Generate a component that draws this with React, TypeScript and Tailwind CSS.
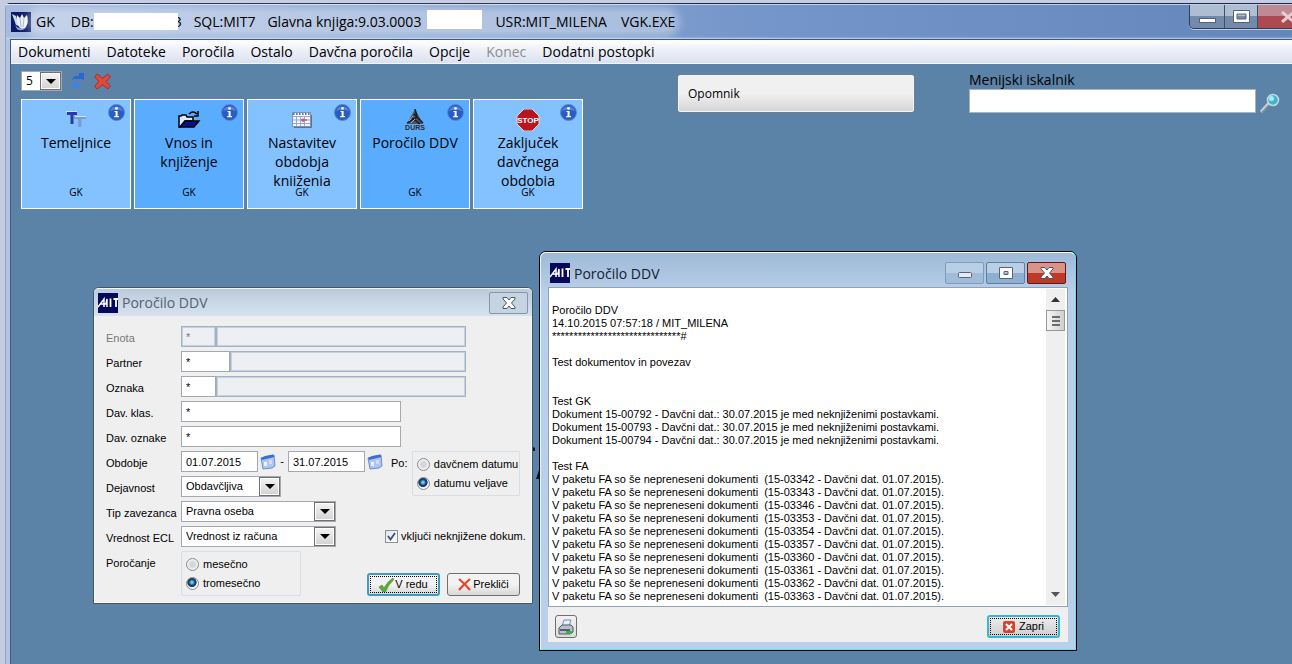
import { useState } from "react"
import type { ReactNode } from "react"
import clsx from "clsx"

interface TileProps {
  title: string
  icon: ReactNode
  strong?: boolean
}

const MENU = [
  { label: "Dokumenti" },
  { label: "Datoteke" },
  { label: "Poročila" },
  { label: "Ostalo" },
  { label: "Davčna poročila" },
  { label: "Opcije" },
  { label: "Konec", disabled: true },
  { label: "Dodatni postopki" },
]

const GK_DOCS = ["15-00792", "15-00793", "15-00794"]
const FA_DOCS = [
  "15-03342",
  "15-03343",
  "15-03346",
  "15-03353",
  "15-03354",
  "15-03357",
  "15-03360",
  "15-03361",
  "15-03362",
  "15-03363",
]

const REPORT = [
  "",
  "Poročilo DDV",
  "14.10.2015 07:57:18 / MIT_MILENA",
  "******************************#",
  "",
  "Test dokumentov in povezav",
  "",
  "",
  "Test GK",
  ...GK_DOCS.map((d) => `Dokument ${d} - Davčni dat.: 30.07.2015 je med neknjiženimi postavkami.`),
  "",
  "Test FA",
  ...FA_DOCS.map((d) => `V paketu FA so še nepreneseni dokumenti  (${d} - Davčni dat. 01.07.2015).`),
]

/* ---------- icons ---------- */

function AppIcon() {
  return (
    <svg width="20" height="20" viewBox="0 0 20 20" className="shrink-0" aria-hidden="true">
      <rect width="20" height="20" fill="#0a1a66" />
      <path d="M1 2 L5 4 L8 14 L5 13 Z" fill="#c9d6f0" />
      <path d="M6 3 L9 6 L11 2 L13 6 L16 3 Q18 10 15 15 Q12 19 8 15 Q5 10 6 3Z" fill="#eef3fb" />
      <path d="M9 6 L10 15 M13 6 L12 15" stroke="#9fb3dc" strokeWidth="1" />
      <path d="M4 13 Q8 18 15 16 Q10 20 6 17Z" fill="#8da6da" />
    </svg>
  )
}

function MitIcon() {
  return (
    <svg width="20" height="20" viewBox="0 0 20 20" className="shrink-0" aria-hidden="true">
      <rect width="20" height="20" fill="#06085c" />
      <path d="M0 14 L6 6 L6 14 M2 11 H8 L9 6 V14" fill="none" stroke="#fff" strokeWidth="1.5" />
      <path d="M12.500 5.500 V14 M18 5.500 V14 M15.500 6 H20" fill="none" stroke="#fff" strokeWidth="1.8" />
    </svg>
  )
}

function InfoIcon() {
  return (
    <svg width="17" height="17" viewBox="0 0 17 17" aria-hidden="true">
      <circle cx="8.5" cy="8.5" r="8" fill="#2a5cc6" stroke="#5b86d6" />
      <path d="M2 7 A7 7 0 0 1 15 7 Q8 4 2 7Z" fill="#5485dd" />
      <circle cx="8.5" cy="4.4" r="1.4" fill="#fff" />
      <path d="M6.5 7 H9.6 V12 H11 V13.2 H6.2 V12 H7.6 V8.1 H6.5Z" fill="#fff" />
    </svg>
  )
}

function TypeIcon() {
  return (
    <svg width="22" height="20" viewBox="0 0 22 20" aria-hidden="true">
      <path d="M2 2 H12 V5 H8.500 V14 H5.500 V5 H2Z" fill="#2b3a9c" />
      <path d="M9 6 H21 V9 H16.500 V17 H13 V9 H9Z" fill="#7b9bd6" />
      <path d="M1 1.500 H12 M10 6.500 H21" stroke="#cfe2fb" />
    </svg>
  )
}

function FolderIcon() {
  return (
    <svg width="24" height="20" viewBox="0 0 24 20" aria-hidden="true">
      <path d="M2 6 H4 L5 5 H9 L10 7 H16 V11 H8 L3 17 H2Z" fill="#dbe7fa" stroke="#000" strokeWidth="1.5" />
      <path d="M8 11 H22 L17 17 H3Z" fill="#06108a" stroke="#000" strokeWidth="1.4" />
      <path d="M12 4 Q16 0 20 4 M21 1 V6 H17" fill="none" stroke="#000" strokeWidth="1.4" />
    </svg>
  )
}

function CalendarIcon() {
  return (
    <svg width="22" height="20" viewBox="0 0 22 20" aria-hidden="true">
      <rect x="1.500" y="2.500" width="18" height="14" fill="#f4f8ff" stroke="#7d92bd" />
      <path d="M2 6.500 H19 M2 10 H19 M2 13.500 H19 M5.500 6 V16 M9.500 6 V16 M13.500 6 V16" stroke="#94a7cc" />
      <path d="M2 4 H19" stroke="#5b71a5" strokeWidth="2" strokeDasharray="1.5 1.5" />
      <path d="M10 10 H16 M12 8.500 V12" stroke="#d3506a" strokeWidth="1.500" />
      <path d="M3 17.500 H20.500 V5" fill="none" stroke="#5f6f92" />
    </svg>
  )
}

function DursIcon() {
  return (
    <svg width="24" height="22" viewBox="0 0 24 22" aria-hidden="true">
      <path d="M12 0 L20 15 H4Z" fill="#4b5059" />
      <path d="M12 0 L14 8 L4 14 M11 5 L20 14 M8 8 L17 15" fill="none" stroke="#16181c" strokeWidth="1.4" />
      <path d="M10 7 L6 12 M12 10 L8 14" stroke="#aab6c6" strokeWidth="1" />
      <text x="12" y="21" textAnchor="middle" fontSize="7" fontWeight="bold" fontFamily="Liberation Sans, sans-serif" fill="#2b2a2c">
        DURS
      </text>
    </svg>
  )
}

function StopIcon() {
  return (
    <svg width="24" height="22" viewBox="0 0 24 22" aria-hidden="true">
      <path d="M8 0 H16 L23 7 V15 L16 22 H8 L1 15 V7Z" fill="#b9141f" stroke="#e9d6e0" />
      <text x="12" y="14" textAnchor="middle" fontSize="8" fontWeight="bold" fontFamily="Liberation Sans, sans-serif" fill="#fff">
        STOP
      </text>
    </svg>
  )
}

function RefreshIcon() {
  return (
    <svg width="14" height="16" viewBox="0 0 14 16" aria-hidden="true">
      <path d="M1 7 Q3 2 8 3 V0 H13 V7 L10 6 L8 6 Q4 5 1 7Z" fill="#2a66d8" />
      <path d="M11 11 Q9 15 5 15 L2 14 V9 L5 8 L8 10 L6 11 Q9 12 11 11Z" fill="#3f80ea" />
    </svg>
  )
}

function RedCross() {
  return (
    <svg width="17" height="17" viewBox="0 0 16 16" aria-hidden="true">
      <path
        d="M3 1 L8 5 L13 1 L15.500 3.500 L11.500 8 L15.500 12.500 L13 15 L8 11 L3 15 L0.500 12.500 L4.500 8 L0.500 3.500Z"
        fill="#e2493c"
        stroke="#a3231c"
        strokeWidth="0.8"
      />
    </svg>
  )
}

function SearchIcon() {
  return (
    <svg width="20" height="20" viewBox="0 0 20 20" aria-hidden="true">
      <path d="M1 19 L9 10" stroke="#c9ced4" strokeWidth="3" />
      <path d="M1.500 19.500 L9 11.500" stroke="#6f7c8c" strokeWidth="1" />
      <circle cx="13" cy="7" r="5.500" fill="#3fb4cd" stroke="#c3d6df" strokeWidth="1.600" />
      <circle cx="11.500" cy="5.500" r="2.500" fill="#a7ecf6" />
    </svg>
  )
}

function DateIcon() {
  return (
    <svg width="16" height="16" viewBox="0 0 16 16" aria-hidden="true">
      <path d="M1 4 L14 1 L15 12 L12 14 L3 15Z" fill="#a9c6f5" stroke="#6a8fd4" />
      <path d="M1 4 L5 2 L13 0.500 L14.500 3 L2 6Z" fill="#3c6fd0" />
      <path d="M4 8 H7 V12 H4Z" fill="#eaf2ff" />
      <path d="M9 6 H12 V10 H9Z" fill="#f0cfe4" />
    </svg>
  )
}

function CheckIcon() {
  return (
    <svg width="15" height="14" viewBox="0 0 15 14" aria-hidden="true">
      <path d="M0 9 L3 7 L5 10 Q9 3 14 0 L14.500 2 Q9 7 6.500 14 H4Z" fill="#5dab3d" stroke="#3d8a2a" strokeWidth="0.6" />
    </svg>
  )
}

function CancelIcon() {
  return (
    <svg width="13" height="13" viewBox="0 0 13 13" aria-hidden="true">
      <path d="M1 1 Q7 6 12 12 M12 1 Q6 6 1 12" fill="none" stroke="#e8432c" strokeWidth="2.2" />
    </svg>
  )
}

function CloseGlyph() {
  return (
    <svg width="14" height="12" viewBox="0 0 14 12" aria-hidden="true">
      <path
        d="M1 0.500 H5 L7 3 L9 0.500 H13 V2 L9.500 6 L13 10 V11.500 H9 L7 9 L5 11.500 H1 V10 L4.500 6 L1 2Z"
        fill="#fff"
        stroke="#4c5563"
        strokeWidth="1"
      />
    </svg>
  )
}

function MinGlyph() {
  return (
    <svg width="14" height="6" viewBox="0 0 14 6" aria-hidden="true">
      <rect x="0.500" y="0.500" width="13" height="5" rx="1" fill="#fff" fillOpacity="0.7" stroke="#5a6474" />
    </svg>
  )
}

function MaxGlyph() {
  return (
    <svg width="14" height="12" viewBox="0 0 14 12" aria-hidden="true">
      <path d="M0.500 0.500 H13.500 V11.500 H0.500Z M5 4.500 V7.500 H9 V4.500Z" fill="#fff" fillRule="evenodd" stroke="#5a6474" />
    </svg>
  )
}

function PrinterIcon() {
  return (
    <svg width="16" height="16" viewBox="0 0 16 16" aria-hidden="true">
      <path d="M4 7 L6 1 H13 L11 7Z" fill="#e6eefb" stroke="#7a8fb8" />
      <path d="M1 9 L4 6 H13 L15 8 V13 L12 15 H1Z" fill="#b9c0cc" stroke="#4c566a" />
      <path d="M2 10 H12 V12 H2Z" fill="#525f74" />
      <path d="M8 12 H14 V15 H8Z" fill="#3bb143" />
    </svg>
  )
}

/* ---------- small controls ---------- */

function DropArrow() {
  return (
    <span className="pointer-events-none absolute inset-y-px right-px flex w-[21px] items-center justify-center border border-[#707070] bg-linear-to-b from-[#f4f4f4] to-[#d2d2d2] shadow-[inset_0_0_0_1px_#fff]">
      <svg width="10" height="5" viewBox="0 0 10 5" aria-hidden="true">
        <path d="M0 0 H10 L5 5Z" fill="#000" />
      </svg>
    </span>
  )
}

function Combo({ id, value, className }: { id: string; value: string; className: string }) {
  return (
    <div className={clsx("relative h-[21px] shrink-0", className)}>
      <select
        id={id}
        defaultValue={value}
        className="block h-full w-full appearance-none border border-[#a5a8ae] bg-white pr-6 pl-1 text-[11px] leading-[19px]"
      >
        <option>{value}</option>
      </select>
      <DropArrow />
    </div>
  )
}

function Row({ label, id, muted, children }: { label: string; id: string; muted?: boolean; children: ReactNode }) {
  return (
    <div className="flex h-[21px]">
      <label htmlFor={id} className={clsx("w-[75px] shrink-0 pt-1 leading-4 whitespace-nowrap", muted && "text-[#777]")}>
        {label}
      </label>
      {children}
    </div>
  )
}

function Field({ id, value = "", disabled, className }: { id?: string; value?: string; disabled?: boolean; className: string }) {
  return (
    <input
      id={id}
      aria-label={id ? undefined : "Naziv"}
      defaultValue={value}
      disabled={disabled}
      className={clsx(
        "h-[21px] shrink-0 border px-1 leading-4",
        disabled ? "border-[#a3b3c7] bg-[#edeff3] text-[#777] shadow-[inset_0_0_0_1px_#c6d1df]" : "border-[#a5a8ae] bg-white",
        className,
      )}
    />
  )
}

function Radio({ name, label, checked, onChange }: { name: string; label: string; checked: boolean; onChange: () => void }) {
  return (
    <label className="flex h-[19px] items-center gap-1 whitespace-nowrap">
      <input
        type="radio"
        name={name}
        checked={checked}
        onChange={onChange}
        className="size-[13px] shrink-0 appearance-none rounded-full border border-[#868a8f] bg-[radial-gradient(circle,#d4d7da_30%,#fafafa_75%)] checked:bg-[radial-gradient(circle_at_45%_40%,#7fd0ee_8%,#123f6e_35%,#123f6e_48%,#f4f4f4_56%)]"
      />
      {label}
    </label>
  )
}

function Tile({ title, icon, strong }: TileProps) {
  return (
    <button
      type="button"
      className={clsx(
        "relative flex h-[110px] w-[110px] flex-col items-center border border-white pt-2",
        strong ? "bg-[#5aacff]" : "bg-[#84c1ff]",
      )}
    >
      <span className="absolute top-1 right-[5px]">
        <InfoIcon />
      </span>
      <span className="flex h-6 items-center">{icon}</span>
      <span className="mt-px h-[53px] overflow-hidden px-2 text-[14px] leading-[19px]">{title}</span>
      <span className="text-[10px] leading-3">GK</span>
    </button>
  )
}

/* ---------- windows ---------- */

function TitleBar() {
  return (
    <header className="flex h-[35px] items-start border-t border-white/60 bg-linear-to-r from-[#a7bbdf] via-[#7495c9] via-60% to-[#6486ba] pl-[5px] shadow-[inset_0_-2px_2px_-1px_#c8d8f0]">
      <div className="flex h-[33px] items-center text-[14px] whitespace-pre">
        <AppIcon />
        <h1 className="flex h-5 items-center rounded-full bg-white/35 pl-[5px] shadow-[0_0_8px_5px_rgb(255_255_255/0.35)]">
          <span className="mr-4">GK</span>
          <span>DB:</span>
          <span className="mr-3 flex h-[17px] w-[88px] items-center justify-end bg-linear-to-r from-white from-95% to-transparent to-95%">
            <span className="w-1 overflow-hidden" dir="rtl">3</span>
          </span>
          <span className="mr-3">SQL:MIT7</span>
          <span className="mr-[6px]">Glavna knjiga:9.03.0003</span>
          <span className="mr-[13px] mb-1 h-[19px] w-[55px] bg-white" />
          <span className="mr-[14px]">USR:MIT_MILENA</span>
          <span>VGK.EXE</span>
        </h1>
      </div>
      <div className="ml-auto flex h-6 overflow-hidden rounded-bl-[5px] border-b border-l border-[#2c3f60] shadow-[0_1px_0_#ffffff90]">
        <button type="button" aria-label="Pomanjšaj" className="flex w-[35px] items-center justify-center border-r border-[#3b4f70] bg-linear-to-b from-[#aebdd2] from-50% to-[#738aab] to-50% pt-2">
          <svg width="17" height="5" viewBox="0 0 17 5" aria-hidden="true">
            <rect x="0.500" y="0.500" width="16" height="4" fill="#fff" stroke="#55617a" />
          </svg>
        </button>
        <button type="button" aria-label="Povečaj" className="flex w-[33px] items-center justify-center border-r border-[#3b4f70] bg-linear-to-b from-[#aebdd2] from-50% to-[#738aab] to-50%">
          <svg width="17" height="13" viewBox="0 0 17 13" aria-hidden="true">
            <path d="M0.500 0.500 H16.500 V12.500 H0.500Z M4 4 V9 H13 V4Z" fill="#fff" fillRule="evenodd" stroke="#55617a" />
          </svg>
        </button>
        <button type="button" aria-label="Zapri" className="flex w-[34px] items-center overflow-hidden bg-linear-to-b from-[#c08a94] from-50% to-[#ab4a50] to-50% pl-[22px]">
          <svg width="16" height="12" viewBox="0 0 16 12" className="shrink-0" aria-hidden="true">
            <path d="M2 1 L14 11 M14 1 L2 11" stroke="#e6cfd4" strokeWidth="3" />
          </svg>
        </button>
      </div>
    </header>
  )
}

function MenuBar() {
  return (
    <nav className="flex h-[25px] items-center gap-4 border-t border-b border-t-[#3d5a87] border-b-[#f4f6fb] bg-linear-to-b from-white via-[#eef1f8] via-40% to-[#dbe1f1] pl-[7px] text-[14px] whitespace-nowrap">
      {MENU.map((item) => (
        <button key={item.label} type="button" disabled={item.disabled} className="disabled:text-[#8d8d8d]">
          {item.label}
        </button>
      ))}
    </nav>
  )
}

function VatDialog() {
  const [by, setBy] = useState("veljave")
  const [period, setPeriod] = useState("tromesecno")

  return (
    <section className="absolute top-[223px] left-[82px] w-[440px] rounded-t-[6px] border border-[#46566a] bg-[#efefef] font-['Liberation_Sans',Arial,sans-serif] text-[11px] shadow-[inset_0_0_0_1px_#f6f9fc]">
      <div className="flex h-7 items-center rounded-t-[5px] border-t border-white/70 bg-linear-to-b from-[#bccbdb] to-[#d6e2f0] pr-1 pl-1">
        <MitIcon />
        <h2 className="ml-1 font-['Open_Sans','Noto_Sans',sans-serif] text-[14px] text-[#56616e]">Poročilo DDV</h2>
        <button type="button" aria-label="Zapri okno" className="ml-auto flex h-[22px] w-[39px] items-center justify-center rounded-xs border border-[#8795a8] bg-[#c6d3e2]">
          <CloseGlyph />
        </button>
      </div>

      <form className="flex flex-col gap-1 pt-[10px] pr-3 pb-[7px] pl-3" onSubmit={(e) => e.preventDefault()}>
        <Row label="Enota" id="enota" muted>
          <Field id="enota" value="*" disabled className="w-[35px]" />
          <Field disabled className="w-[250px]" />
        </Row>
        <Row label="Partner" id="partner">
          <Field id="partner" value="*" className="w-[49px]" />
          <Field disabled className="w-[236px]" />
        </Row>
        <Row label="Oznaka" id="oznaka">
          <Field id="oznaka" value="*" className="w-[35px]" />
          <Field disabled className="w-[250px]" />
        </Row>
        <Row label="Dav. klas." id="klas">
          <Field id="klas" value="*" className="w-[220px]" />
        </Row>
        <Row label="Dav. oznake" id="oznake">
          <Field id="oznake" value="*" className="w-[220px]" />
        </Row>

        <div className="flex">
          <div className="flex w-[285px] shrink-0 flex-col gap-1">
            <Row label="Obdobje" id="od">
              <Field id="od" value="01.07.2015" className="w-[77px]" />
              <button type="button" aria-label="Izberi začetni datum" className="ml-[2px]">
                <DateIcon />
              </button>
              <span className="w-3 pt-1 text-center leading-3">-</span>
              <Field id="do" value="31.07.2015" className="w-[77px]" />
              <button type="button" aria-label="Izberi končni datum" className="ml-[2px]">
                <DateIcon />
              </button>
            </Row>
            <Row label="Dejavnost" id="dejavnost">
              <Combo id="dejavnost" value="Obdavčljiva" className="w-[100px]" />
            </Row>
          </div>
          <span className="w-[21px] pt-1 leading-4">Po:</span>
          <fieldset aria-label="Po" className="h-[45px] w-[109px] rounded-xs border border-[#d5dfe5] pt-[3px] pl-1">
            <Radio name="by" label="davčnem datumu" checked={by === "davcnem"} onChange={() => setBy("davcnem")} />
            <Radio name="by" label="datumu veljave" checked={by === "veljave"} onChange={() => setBy("veljave")} />
          </fieldset>
        </div>

        <Row label="Tip zavezanca" id="tip">
          <Combo id="tip" value="Pravna oseba" className="w-[155px]" />
        </Row>
        <Row label="Vrednost ECL" id="ecl">
          <Combo id="ecl" value="Vrednost iz računa" className="w-[155px]" />
          <label className="relative ml-[49px] flex shrink-0 items-center gap-[3px] whitespace-nowrap">
            <input type="checkbox" defaultChecked className="peer size-[13px] appearance-none border border-[#8e8f8f] bg-linear-to-br from-[#dfe3ea] to-white" />
            <svg width="9" height="9" viewBox="0 0 9 9" className="absolute left-[2px] hidden peer-checked:block" aria-hidden="true">
              <path d="M1 4 L3.500 7.500 L8 1" fill="none" stroke="#3a4f86" strokeWidth="1.8" />
            </svg>
            vključi neknjižene dokum.
          </label>
        </Row>

        <div className="flex items-start">
          <span className="w-[75px] pt-1 leading-4">Poročanje</span>
          <fieldset aria-label="Poročanje" className="h-[45px] w-[120px] rounded-xs border border-[#d5dfe5] pt-[3px] pl-1">
            <Radio name="period" label="mesečno" checked={period === "mesecno"} onChange={() => setPeriod("mesecno")} />
            <Radio name="period" label="tromesečno" checked={period === "tromesecno"} onChange={() => setPeriod("tromesecno")} />
          </fieldset>
          <div className="ml-auto flex gap-[7px] self-end">
            <button type="submit" className="h-[23px] w-[73px] rounded-[3px] border-2 border-[#3c9cc4] bg-linear-to-b from-[#f2f2f2] from-50% to-[#d8d8d8] p-px">
              <span className="flex h-full items-center justify-center gap-px border border-dotted border-black">
                <CheckIcon />V redu
              </span>
            </button>
            <button type="button" className="flex h-[23px] w-[73px] items-center justify-center gap-[2px] rounded-[3px] border border-[#707070] bg-linear-to-b from-[#f2f2f2] from-50% to-[#d8d8d8]">
              <CancelIcon />
              Prekliči
            </button>
          </div>
        </div>
      </form>
    </section>
  )
}

function ReportWindow() {
  return (
    <section className="absolute top-[187px] left-[528px] w-[538px] rounded-t-[7px] border border-black bg-linear-to-b from-[#9db9d6] to-[#b9cfea] to-10% font-['Liberation_Sans',Arial,sans-serif] text-[11px]">
      <div className="rounded-t-[6px] border border-t-white border-r-[#6fdcf4] border-b-[#6fdcf4] border-l-[#e8f2fc] px-[7px] pb-[7px]">
        <div className="flex h-[34px] items-center pt-[6px] pl-[2px]">
          <MitIcon />
          <h2 className="ml-1 font-['Open_Sans','Noto_Sans',sans-serif] text-[14px] text-[#152030]">Poročilo DDV</h2>
          <div className="ml-auto flex gap-[2px] pr-[2px]">
            <button type="button" aria-label="Pomanjšaj okno" className="flex h-[22px] w-[39px] items-center justify-center rounded-xs border border-[#7f9cbc] bg-linear-to-b from-[#b9cfe6] from-50% to-[#a0bcd9] to-50% pt-1">
              <MinGlyph />
            </button>
            <button type="button" aria-label="Povečaj okno" className="flex h-[22px] w-[39px] items-center justify-center rounded-xs border border-[#5f7fa5] bg-linear-to-b from-[#b9cfe6] from-50% to-[#8fafd1] to-50%">
              <MaxGlyph />
            </button>
            <button type="button" aria-label="Zapri poročilo" className="flex h-[22px] w-[39px] items-center justify-center rounded-xs border border-[#5c1c18] bg-linear-to-b from-[#dc9286] from-50% to-[#bd3a26] to-50%">
              <CloseGlyph />
            </button>
          </div>
        </div>

        <div className="flex h-[320px] border border-[#8fa3b8] bg-white">
          <div className="flex-1 overflow-hidden pt-[3px] pl-[3px] leading-[13px] whitespace-pre">
            {REPORT.map((line, i) => (
              <p key={i} className="h-[13px]">
                {line}
              </p>
            ))}
          </div>
          <div className="my-px mr-[2px] flex w-[19px] flex-col items-center bg-[#efefef]">
            <svg width="9" height="5" viewBox="0 0 9 5" className="mt-2" aria-hidden="true">
              <path d="M0 5 L4.500 0 L9 5Z" fill="#333" />
            </svg>
            <div className="mt-2 flex h-[21px] w-full flex-col items-center justify-center gap-[2px] border border-[#979797] bg-linear-to-r from-[#f6f6f6] to-[#cfcfcf]">
              <span className="h-[2px] w-2 bg-[#6b6b6b]" />
              <span className="h-[2px] w-2 bg-[#6b6b6b]" />
              <span className="h-[2px] w-2 bg-[#6b6b6b]" />
            </div>
            <svg width="9" height="5" viewBox="0 0 9 5" className="mt-auto mb-2" aria-hidden="true">
              <path d="M0 0 L4.500 5 L9 0Z" fill="#555" />
            </svg>
          </div>
        </div>

        <div className="flex h-[35px] items-center justify-between bg-[#efefef] pt-1 pr-2 pl-[7px]">
          <button type="button" aria-label="Natisni" className="flex h-[23px] w-[22px] items-center justify-center rounded-[3px] border border-[#707070] bg-linear-to-b from-[#f2f2f2] to-[#dcdcdc]">
            <PrinterIcon />
          </button>
          <button type="button" className="h-[23px] w-[73px] rounded-[3px] border-2 border-[#33b5dc] bg-linear-to-b from-[#ededed] to-[#cfcfcf] p-px">
            <span className="flex h-full items-center justify-center gap-1 border border-dotted border-black">
              <svg width="12" height="12" viewBox="0 0 12 12" aria-hidden="true">
                <rect width="12" height="12" rx="2" fill="#d9432b" />
                <path d="M3 3 L9 9 M9 3 L3 9" stroke="#fff" strokeWidth="2" />
              </svg>
              Zapri
            </span>
          </button>
        </div>
      </div>
    </section>
  )
}

export default function App() {
  return (
    <div className="flex min-h-screen flex-col overflow-hidden bg-[#c6cde0] pt-[3px] pl-[5px] font-['Open_Sans','Noto_Sans',sans-serif] text-black">
      <div className="flex flex-1 flex-col rounded-tl-[5px] border-t border-l border-t-[#17294c] border-l-[#8fa5c8] bg-[#b4c4e0]">
        <TitleBar />
        <div className="ml-1 flex flex-1 flex-col border-l border-[#3d5a87]">
          <MenuBar />
          <main className="relative flex-1 bg-[#5b82a7] pt-[7px] pl-[10px]">
            <div className="flex items-start">
              <div className="flex flex-col gap-2">
                <div className="flex h-5 items-center gap-[9px]">
                  <div className="relative h-5 w-[41px]">
                    <select aria-label="Število ikon" defaultValue="5" className="block h-full w-full appearance-none border border-[#a5a8ae] bg-white pl-1 text-[12px] leading-4">
                      <option>5</option>
                    </select>
                    <DropArrow />
                  </div>
                  <button type="button" aria-label="Osveži">
                    <RefreshIcon />
                  </button>
                  <button type="button" aria-label="Izbriši">
                    <RedCross />
                  </button>
                </div>
                <div className="flex gap-[3px]">
                  <Tile title="Temeljnice" icon={<TypeIcon />} />
                  <Tile title="Vnos in knjiženje" icon={<FolderIcon />} strong />
                  <Tile title="Nastavitev obdobja knjiženja" icon={<CalendarIcon />} />
                  <Tile title="Poročilo DDV" icon={<DursIcon />} strong />
                  <Tile title="Zaključek davčnega obdobja" icon={<StopIcon />} />
                </div>
              </div>

              <button type="button" className="mt-1 ml-[95px] h-[37px] w-[236px] rounded-xs border border-[#f4f4f4] bg-linear-to-b from-[#f0f0f0] from-50% to-[#d6d6d6] pl-[9px] text-left text-[12px] shadow-[0_0_0_1px_#6c7f93]">
                Opomnik
              </button>

              <div className="mr-3 ml-auto flex w-[311px] items-end gap-1">
                <div className="flex-1">
                  <label htmlFor="iskalnik" className="block text-[14px] leading-[18px]">
                    Menijski iskalnik
                  </label>
                  <input id="iskalnik" className="block h-6 w-full border border-[#a5b4c3] bg-white px-1 text-[12px]" />
                </div>
                <button type="button" aria-label="Išči">
                  <SearchIcon />
                </button>
              </div>
            </div>

            {/* edge of the backdrop lettering, seen between the two windows */}
            <svg width="8" height="34" viewBox="0 0 8 34" className="absolute top-[383px] left-[522px]" aria-hidden="true">
              <path d="M0 0 L2 1 V4 H0Z M7 20 V32 H3Z" fill="#0b1420" />
            </svg>

            <VatDialog />
            <ReportWindow />
          </main>
        </div>
      </div>
    </div>
  )
}
